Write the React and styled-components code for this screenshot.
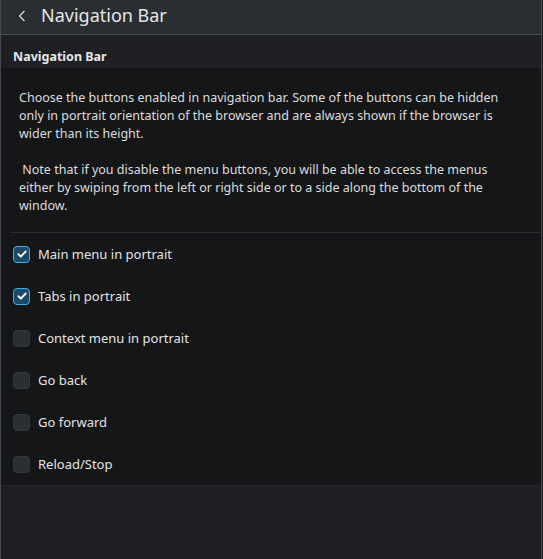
import React from "react";
import styled, { createGlobalStyle } from "styled-components";

const Global = createGlobalStyle`
  html, body { margin: 0; padding: 0; background: #1d1f22; }
  body { font-family: "Noto Sans", "Open Sans", sans-serif; }
  * { box-sizing: border-box; }
`;

const Page = styled.div`
  width: 542px;
  height: 559px;
  display: flex;
  flex-direction: column;
  background: #1d1f22;
  border-left: 1px solid #45494e;
  border-right: 1px solid #45494e;
  overflow: hidden;
`;

const Header = styled.header`
  height: 35px;
  flex: none;
  display: flex;
  align-items: center;
  background: #2a2e32;
  border-bottom: 1px solid #4d5156;
  padding-left: 14px;
  gap: 12px;
`;

const BackButton = styled.button`
  width: 14px;
  height: 22px;
  padding: 0;
  border: none;
  background: transparent;
  display: flex;
  align-items: center;
  justify-content: center;
  color: #dcdde0;
  margin-top: -3px;
`;

const Title = styled.h1`
  margin: 0;
  font-size: 18px;
  font-weight: 400;
  color: #e4e5e7;
  line-height: 1;
  margin-top: -4px;
`;

const SectionHeader = styled.div`
  height: 34px;
  flex: none;
  display: flex;
  align-items: center;
  padding-left: 12px;
  padding-top: 9px;
  background: #1e2023;
  border-bottom: 1px solid #141517;
  font-size: 12.5px;
  font-weight: 700;
  color: #e6e7e9;
`;

const Content = styled.section`
  background: #151618;
  flex: none;
  display: flex;
  flex-direction: column;
`;

const Description = styled.div`
  padding: 20px 30px 17px 9px;
  margin-left: 9px;
  font-size: 12.5px;
  line-height: 18px;
  color: #dcdddf;
  border-bottom: 1px solid #2b2e32;
`;

const Para = styled.p`
  margin: 0;
  white-space: pre-wrap;
  & + & { margin-top: 18px; }
`;

const List = styled.div`
  display: flex;
  flex-direction: column;
`;

const Row = styled.label`
  height: 42px;
  display: flex;
  align-items: center;
  padding-left: 12px;
  gap: 8px;
  font-size: 13px;
  color: #e2e3e5;
`;

const Box = styled.span`
  width: 17px;
  height: 17px;
  border-radius: 4px;
  display: flex;
  align-items: center;
  justify-content: center;
  background: ${(p) => (p.$checked ? "#1c4a66" : "#2b2e33")};
  border: 1px solid ${(p) => (p.$checked ? "#3daee9" : "#33373c")};
`;

const Bottom = styled.div`
  flex: 1;
  background: #1d1f22;
  border-top: 1px solid #222428;
`;

const items = [
  ["Main menu in portrait", true],
  ["Tabs in portrait", true],
  ["Context menu in portrait", false],
  ["Go back", false],
  ["Go forward", false],
  ["Reload/Stop", false],
];

export default function App() {
  return (
    <>
      <Global />
      <Page>
        <Header>
          <BackButton aria-label="Back">
            <svg width="8" height="12" viewBox="0 0 8 12">
              <path d="M6.5 1 L1.5 6 L6.5 11" fill="none" stroke="currentColor" strokeWidth="1.2" />
            </svg>
          </BackButton>
          <Title>Navigation Bar</Title>
        </Header>
        <SectionHeader>Navigation Bar</SectionHeader>
        <Content>
          <Description>
            <Para>
              Choose the buttons enabled in navigation bar. Some of the buttons can be hidden only in portrait orientation of the browser and are always shown if the browser is wider than its height.
            </Para>
            <Para>
              {" Note that if you disable the menu buttons, you will be able to access the menus either by swiping from the left or right side or to a side along the bottom of the window."}
            </Para>
          </Description>
          <List>
            {items.map(([label, checked]) => (
              <Row key={label}>
                <Box $checked={checked}>
                  {checked && (
                    <svg width="10" height="8" viewBox="0 0 10 8">
                      <path d="M1.3 4.2 L3.8 6.5 L8.7 1.5" fill="none" stroke="#fff" strokeWidth="1.8" strokeLinecap="round" strokeLinejoin="round" />
                    </svg>
                  )}
                </Box>
                {label}
              </Row>
            ))}
          </List>
        </Content>
        <Bottom />
      </Page>
    </>
  );
}
